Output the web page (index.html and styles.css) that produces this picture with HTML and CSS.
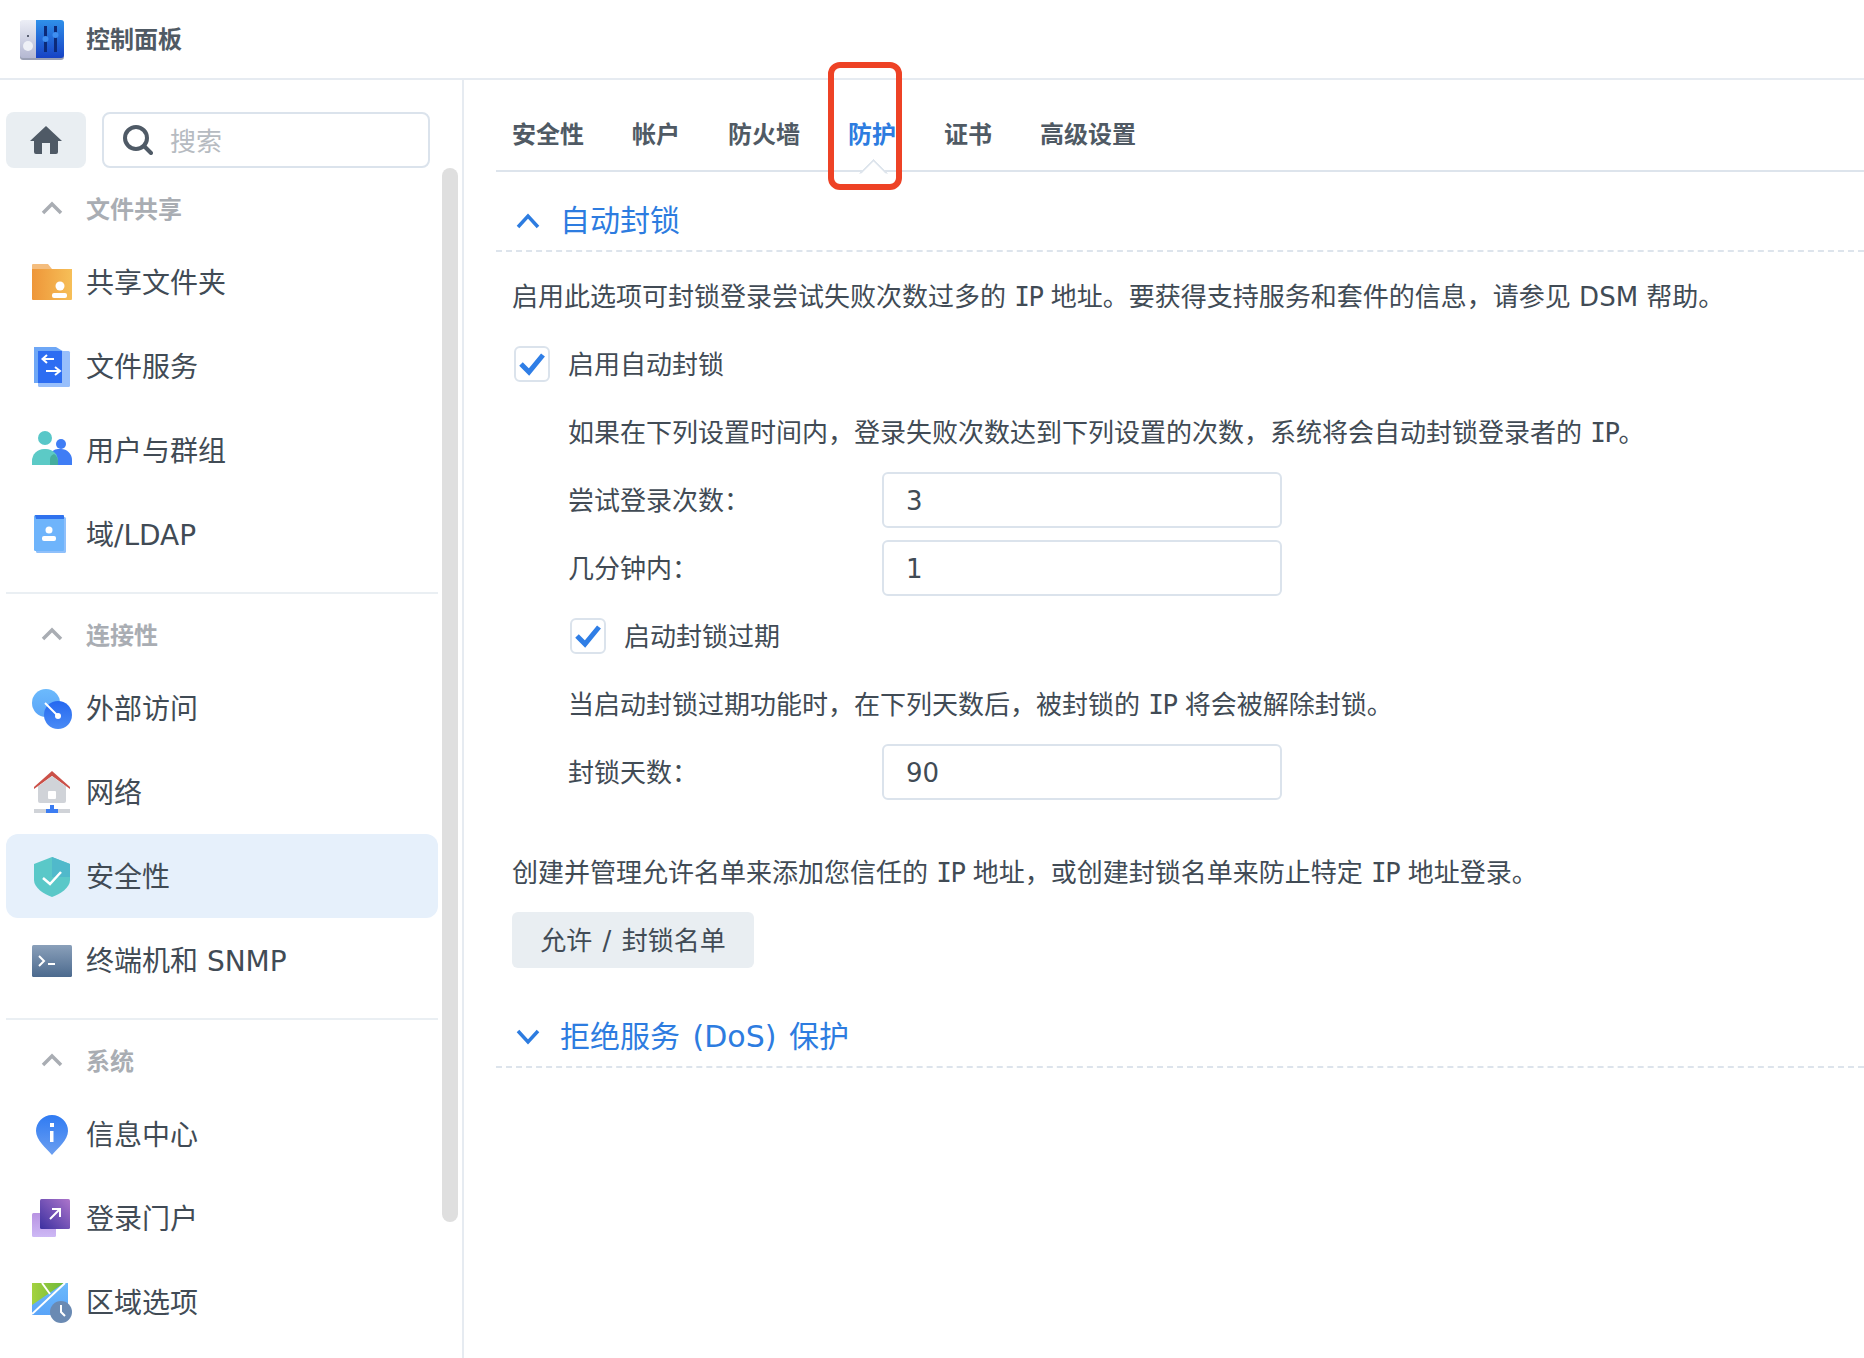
FILE: index.html
```html
<!DOCTYPE html>
<html lang="zh-CN">
<head>
<meta charset="utf-8">
<title>控制面板</title>
<link rel="stylesheet" href="styles.css">
</head>
<body>
<svg class="defs" width="0" height="0" aria-hidden="true">
  <defs>
    <linearGradient id="gLogoL" x1="0" y1="0" x2="0" y2="1"><stop offset="0" stop-color="#eceef6"/><stop offset="1" stop-color="#b4b8d2"/></linearGradient>
    <linearGradient id="gLogoR" x1="0" y1="0" x2="0" y2="1"><stop offset="0" stop-color="#2f90ea"/><stop offset="1" stop-color="#1742c4"/></linearGradient>
    <linearGradient id="gFolder" x1="0" y1="0" x2="1" y2="0"><stop offset="0" stop-color="#ee9639"/><stop offset="1" stop-color="#f6bf58"/></linearGradient>
    <linearGradient id="gBlueV" x1="0" y1="0" x2="0" y2="1"><stop offset="0" stop-color="#2568f0"/><stop offset="1" stop-color="#4a8bf5"/></linearGradient>
    <linearGradient id="gSky" x1="0" y1="0" x2="0" y2="1"><stop offset="0" stop-color="#6cbafc"/><stop offset="1" stop-color="#5aa4f8"/></linearGradient>
    <linearGradient id="gTerm" x1="0" y1="0" x2="0" y2="1"><stop offset="0" stop-color="#8aa0ba"/><stop offset="1" stop-color="#4c6a8e"/></linearGradient>
    <linearGradient id="gPin" x1="0" y1="0" x2="0" y2="1"><stop offset="0" stop-color="#2f7bf3"/><stop offset="1" stop-color="#6c9ff0"/></linearGradient>
    <linearGradient id="gPortal" x1="1" y1="0" x2="0" y2="1"><stop offset="0" stop-color="#ad75cb"/><stop offset="1" stop-color="#3b30a0"/></linearGradient>
    <linearGradient id="gPortalB" x1="0" y1="0" x2="0" y2="1"><stop offset="0" stop-color="#b893e2"/><stop offset="1" stop-color="#cdb8f5"/></linearGradient>
    <linearGradient id="gGreen" x1="0" y1="0" x2="1" y2="0"><stop offset="0" stop-color="#a4d23f"/><stop offset="1" stop-color="#6fb83a"/></linearGradient>
  </defs>
</svg>

<header class="app-header">
  <svg class="logo" width="44" height="40" viewBox="0 0 44 40">
    <rect x="0" y="1" width="44" height="39" rx="3" fill="#9aa0b4"/>
    <path d="M3 0H16V38H3a3 3 0 0 1-3-3V3a3 3 0 0 1 3-3Z" fill="url(#gLogoL)"/>
    <path d="M16 0H41a3 3 0 0 1 3 3V35a3 3 0 0 1-3 3H16Z" fill="url(#gLogoR)"/>
    <circle cx="8" cy="26" r="5" fill="#eef0f6"/>
    <rect x="7" y="15" width="2" height="2" fill="#5b6172"/>
    <rect x="24" y="6" width="3" height="26" fill="#0c2a78"/>
    <rect x="34" y="6" width="3" height="26" fill="#0c2a78"/>
    <circle cx="25.500" cy="19" r="3" fill="#3f8ff0"/>
    <circle cx="35.500" cy="15" r="3" fill="#3f8ff0"/>
  </svg>
  <span class="app-title">控制面板</span>
</header>

<div class="app-body">
  <aside class="sidebar">
    <div class="side-col">
      <div class="search-row">
        <button class="home-btn" type="button" aria-label="首页">
          <svg width="32" height="28" viewBox="0 0 32 28"><path d="M16 0 32 15H28V26a2 2 0 0 1-2 2H6a2 2 0 0 1-2-2V15H0Z" fill="#4f5a66"/><rect x="12" y="17" width="8" height="11" fill="#e9eef2"/></svg>
        </button>
        <div class="search-box">
          <svg width="30" height="30" viewBox="0 0 30 30"><circle cx="13" cy="13" r="11" fill="none" stroke="#4f5a66" stroke-width="4"/><path d="M21 21 28 28" stroke="#4f5a66" stroke-width="4" stroke-linecap="round"/></svg>
          <span class="placeholder">搜索</span>
        </div>
      </div>

      <section class="group">
        <div class="group-head"><svg class="head-chev" width="22" height="14" viewBox="0 0 22 14"><path d="M2 12 11 3 20 12" fill="none" stroke="#a9adb3" stroke-width="3.500"/></svg>文件共享</div>
        <div class="item">
          <svg class="ico" width="40" height="40" viewBox="0 0 40 40"><path d="M0 2a1 1 0 0 1 1-1H16L20 6H40V14H0Z" fill="#f4bd7e"/><path d="M0 6H40V36a1 1 0 0 1-1 1H1a1 1 0 0 1-1-1Z" fill="url(#gFolder)"/><circle cx="28" cy="23" r="4.500" fill="#fff"/><rect x="20" y="30" width="15" height="5" rx="2" fill="#fff"/></svg>
          共享文件夹</div>
        <div class="item">
          <svg class="ico" width="40" height="40" viewBox="0 0 40 40"><path d="M2 0H24L34 6V36H2Z" fill="#6ea7f6" /><rect x="6" y="4" width="32" height="36" rx="1.500" fill="#98bffb"/><path d="M6 4H30V36H6Z" fill="#2d6df2"/><path d="M22 12H11M15 8 10.500 12 15 16M14 24H27M23 20 28 24 23 28" fill="none" stroke="#fff" stroke-width="2"/></svg>
          文件服务</div>
        <div class="item">
          <svg class="ico" width="40" height="40" viewBox="0 0 40 40"><path d="M18 25a8 8 0 0 1 8-7h3a11 11 0 0 1 11 11v5H18Z" fill="#3f7df5"/><circle cx="29" cy="13" r="5" fill="#3f7df5"/><circle cx="13" cy="7" r="7" fill="#58c7c8"/><path d="M0 30a12 12 0 0 1 12-12h2a12 12 0 0 1 12 12v4H0Z" fill="#5ccac6"/><path d="M18 34V29a6 6 0 0 1 4-6 9 9 0 0 1 4 7v4Z" fill="#45ad9e"/></svg>
          用户与群组</div>
        <div class="item">
          <svg class="ico" width="40" height="40" viewBox="0 0 40 40"><rect x="4" y="2" width="30" height="36" rx="1.500" fill="#8fc0fb"/><rect x="2" y="0" width="30" height="36" rx="1.500" fill="#6eb4fb"/><path d="M3 0H31a1 1 0 0 1 1 1V4H4Z" fill="#2f72ee"/><circle cx="17" cy="15" r="3.500" fill="#fff"/><rect x="10" y="21" width="14" height="5" rx="2" fill="#fff"/></svg>
          域/LDAP</div>
      </section>

      <section class="group">
        <div class="group-head"><svg class="head-chev" width="22" height="14" viewBox="0 0 22 14"><path d="M2 12 11 3 20 12" fill="none" stroke="#a9adb3" stroke-width="3.500"/></svg>连接性</div>
        <div class="item">
          <svg class="ico" width="40" height="40" viewBox="0 0 40 40"><circle cx="14" cy="14" r="14" fill="url(#gSky)"/><circle cx="26" cy="26" r="14" fill="url(#gBlueV)"/><path d="M13 14 25 26" stroke="#fff" stroke-width="2"/><circle cx="26" cy="27" r="3" fill="#fff"/></svg>
          外部访问</div>
        <div class="item">
          <svg class="ico" width="40" height="44" viewBox="0 0 40 44"><rect x="6" y="14" width="28" height="18" rx="2" fill="#d0d3d8"/><rect x="16" y="20" width="8" height="8" rx="1" fill="#fff"/><path d="M20 0 38 16V18L20 5 2 18V16Z" fill="#cb5048"/><path d="M6 15.500 20 5 34 15.500Z" fill="#d0d3d8"/><rect x="2" y="38" width="36" height="4" fill="#d0d3d8"/><path d="M18 34H22V38H26V42H14V38H18Z" fill="#3b7cf2"/></svg>
          网络</div>
        <div class="item is-active">
          <svg class="ico" width="40" height="40" viewBox="0 0 40 40"><path d="M20 0 38 7V23C38 31 28 37 20 40 12 37 2 31 2 23V7Z" fill="#5ac8c8"/><path d="M20 0 38 7V20H20Z" fill="#50b9cb"/><path d="M11 21 18 27 29 15" fill="none" stroke="#fff" stroke-width="2.500"/></svg>
          安全性</div>
        <div class="item">
          <svg class="ico" width="40" height="32" viewBox="0 0 40 32"><rect width="40" height="32" rx="1.500" fill="url(#gTerm)"/><path d="M7 11 12 16 7 21M16 19H23" fill="none" stroke="#fff" stroke-width="2"/></svg>
          终端机和 SNMP</div>
      </section>

      <section class="group group-last">
        <div class="group-head"><svg class="head-chev" width="22" height="14" viewBox="0 0 22 14"><path d="M2 12 11 3 20 12" fill="none" stroke="#a9adb3" stroke-width="3.500"/></svg>系统</div>
        <div class="item">
          <svg class="ico" width="40" height="40" viewBox="0 0 40 40"><path d="M20 0A16 16 0 0 1 36 16C36 25 26 33 20 40 14 33 4 25 4 16A16 16 0 0 1 20 0Z" fill="url(#gPin)"/><rect x="18" y="8" width="4" height="4" fill="#fff"/><path d="M18 16H21.500V27H18Z" fill="#fff"/></svg>
          信息中心</div>
        <div class="item">
          <svg class="ico" width="40" height="40" viewBox="0 0 40 40"><rect x="0" y="14" width="24" height="24" rx="1.500" fill="url(#gPortalB)"/><rect x="8" y="0" width="30" height="30" rx="1.500" fill="url(#gPortal)"/><path d="M18 20 27 11M20 10H28V18" fill="none" stroke="#fff" stroke-width="2"/></svg>
          登录门户</div>
        <div class="item">
          <svg class="ico" width="40" height="40" viewBox="0 0 40 40"><rect x="0" y="0" width="36" height="32" fill="url(#gSky)"/><path d="M0 0H32L0 22Z" fill="url(#gGreen)"/><path d="M0 31 33 0M10 0 18 11" fill="none" stroke="#fff" stroke-width="2"/><circle cx="29" cy="29" r="11" fill="#6a8ab3"/><path d="M29 22V29L33 33" fill="none" stroke="#fff" stroke-width="2"/></svg>
          区域选项</div>
      </section>
    </div>
    <div class="scroll-track"><div class="scroll-thumb"></div></div>
  </aside>

  <main class="content">
    <nav class="tabs">
      <span class="tab">安全性</span>
      <span class="tab">帐户</span>
      <span class="tab">防火墙</span>
      <span class="tab is-current">防护</span>
      <span class="tab">证书</span>
      <span class="tab">高级设置</span>
    </nav>

    <h2 class="sec-head sec-first">
      <svg width="24" height="16" viewBox="0 0 24 16"><path d="M2 14 12 3 22 14" fill="none" stroke="#2d7ce0" stroke-width="3.500"/></svg>
      自动封锁
    </h2>
    <div class="sec-body">
      <p class="line txt"><span>启用此选项可封锁登录尝试失败次数过多的 <span class="ip">IP</span> 地址。要获得支持服务和套件的信息，请参见 DSM 帮助。</span></p>
      <label class="line check txt"><span class="box"><svg width="28" height="24" viewBox="0 0 28 24"><path d="M3 12 11 20 25 3" fill="none" stroke="#2f7ee6" stroke-width="5"/></svg></span>启用自动封锁</label>
      <div class="indent">
        <p class="line txt"><span>如果在下列设置时间内，登录失败次数达到下列设置的次数，系统将会自动封锁登录者的 <span class="ip">IP</span>。</span></p>
        <div class="line field"><span class="field-label">尝试登录次数：</span><span class="input">3</span></div>
        <div class="line field"><span class="field-label">几分钟内：</span><span class="input">1</span></div>
        <label class="line check txt"><span class="box"><svg width="28" height="24" viewBox="0 0 28 24"><path d="M3 12 11 20 25 3" fill="none" stroke="#2f7ee6" stroke-width="5"/></svg></span>启动封锁过期</label>
        <p class="line txt"><span>当启动封锁过期功能时，在下列天数后，被封锁的 <span class="ip">IP</span> 将会被解除封锁。</span></p>
        <div class="line field"><span class="field-label">封锁天数：</span><span class="input">90</span></div>
      </div>
      <p class="line txt line-gap"><span>创建并管理允许名单来添加您信任的 <span class="ip">IP</span> 地址，或创建封锁名单来防止特定 <span class="ip">IP</span> 地址登录。</span></p>
      <button class="btn" type="button">允许 / 封锁名单</button>
    </div>

    <h2 class="sec-head sec-second">
      <svg width="24" height="16" viewBox="0 0 24 16"><path d="M2 2 12 13 22 2" fill="none" stroke="#2d7ce0" stroke-width="3.500"/></svg>
      拒绝服务 (DoS) 保护
    </h2>

    <div class="callout"></div>
  </main>
</div>
</body>
</html>
```
FILE: styles.css
```css
* { box-sizing: border-box; }
html, body { margin: 0; height: 100%; }
body {
  width: 1864px;
  height: 1358px;
  overflow: hidden;
  background: #fff;
  color: #414b55;
  font-family: "DejaVu Sans", "Noto Sans CJK SC", sans-serif;
  font-size: 26px;
}
.defs { position: absolute; }
.app-header {
  height: 80px;
  display: flex;
  align-items: center;
  padding-left: 20px;
  border-bottom: 2px solid #e6ebf1;
}
.logo { margin-top: 2px; }
.app-title {
  margin-left: 22px;
  margin-top: 2px;
  font-size: 24px;
  font-weight: 600;
  line-height: 36px;
  color: #505a64;
}
.app-body { display: flex; height: 1278px; }

.sidebar {
  width: 464px;
  flex: none;
  display: flex;
  padding-left: 6px;
  border-right: 2px solid #e6ebf1;
}
.side-col { width: 432px; flex: none; }
.search-row { display: flex; gap: 16px; margin-top: 32px; padding-right: 8px; }
.home-btn {
  width: 80px;
  height: 56px;
  padding: 0;
  border: 0;
  border-radius: 8px;
  background: #e9eef2;
  display: flex;
  align-items: center;
  justify-content: center;
}
.search-box {
  flex: 1;
  height: 56px;
  border: 2px solid #dbe3ec;
  border-radius: 8px;
  display: flex;
  align-items: center;
  padding-left: 19px;
  gap: 17px;
}
.placeholder { color: #b6bbc1; font-size: 26px; padding-bottom: 2px; }

.group { padding-bottom: 16px; border-bottom: 2px solid #eaeff3; }
.group-last { border-bottom: 0; }
.group-head {
  height: 60px;
  margin-top: 11px;
  margin-bottom: 1px;
  display: flex;
  align-items: center;
  padding-left: 35px;
  padding-bottom: 4px;
  font-size: 24px;
  font-weight: 600;
  color: #a9adb3;
}
.head-chev { margin-right: 23px; margin-top: 2px; }
.item {
  height: 84px;
  display: flex;
  align-items: center;
  padding-left: 26px;
  padding-bottom: 2px;
  font-size: 28px;
  border-radius: 12px;
  color: #414b55;
}
.ico { flex: none; margin-right: 14px; margin-top: 4px; }
.is-active { background: #e6f0fb; }

.scroll-track { width: 16px; margin-left: 4px; padding-top: 88px; }
.scroll-thumb { width: 16px; height: 1054px; border-radius: 8px; background: #dfdfdf; }

.content { flex: 1; position: relative; padding-left: 32px; }
.tabs {
  height: 92px;
  display: flex;
  gap: 48px;
  padding: 30px 0 0 16px;
  border-bottom: 2px solid #dde4ec;
}
.tab {
  position: relative;
  height: 60px;
  line-height: 50px;
  font-size: 24px;
  font-weight: 600;
  color: #505a64;
}
.is-current { color: #2d7ce0; }
.is-current::after {
  content: "";
  position: absolute;
  left: 14.500px;
  top: 52.500px;
  width: 19px;
  height: 19px;
  background: #fff;
  border-left: 2px solid #dde4ec;
  border-top: 2px solid #dde4ec;
  transform: rotate(45deg);
  clip-path: polygon(0 0, 100% 0, 0 100%);
}

.sec-head {
  margin: 0;
  display: flex;
  align-items: center;
  gap: 20px;
  height: 40px;
  box-sizing: content-box;
  padding-left: 20px;
  font-size: 30px;
  font-weight: 400;
  line-height: 40px;
  word-spacing: 3px;
  color: #2d7ce0;
  border-bottom: 2px dashed #dde4ec;
}
.sec-first { padding-top: 29px; padding-bottom: 9px; }
.sec-second { margin-top: 49px; padding-bottom: 9px; }
.sec-body { padding: 16px 0 0 16px; display: flex; flex-direction: column; align-items: flex-start; gap: 12px; }
.indent { padding-left: 56px; display: flex; flex-direction: column; gap: 12px; }
.line { margin: 0; height: 56px; line-height: 56px; display: flex; align-items: center; white-space: nowrap; }
.txt { padding-top: 2px; }
.ip { font-family: "DejaVu Sans Mono", monospace; letter-spacing: -1.500px; }
.line-gap { margin-top: 32px; }
.check { gap: 18px; padding-left: 2px; }
.box {
  width: 36px;
  height: 36px;
  margin-top: -2px;
  border: 2px solid #dbe3ec;
  border-radius: 6px;
  display: flex;
  align-items: center;
  justify-content: center;
  flex: none;
}
.field { display: flex; }
.field-label { width: 314px; flex: none; padding-top: 2px; }
.input {
  width: 400px;
  height: 56px;
  border: 2px solid #dbe3ec;
  border-radius: 6px;
  padding: 2px 0 0 22px;
  display: flex;
  align-items: center;
}
.btn {
  width: 242px;
  height: 56px;
  border: 0;
  border-radius: 6px;
  background: #e9eef2;
  color: #414b55;
  font: inherit;
  word-spacing: 2px;
  padding: 0 0 3px;
}
.callout {
  position: absolute;
  left: 364px;
  top: -18px;
  width: 74px;
  height: 128px;
  border: 6px solid #ee4225;
  border-radius: 12px;
}
```
